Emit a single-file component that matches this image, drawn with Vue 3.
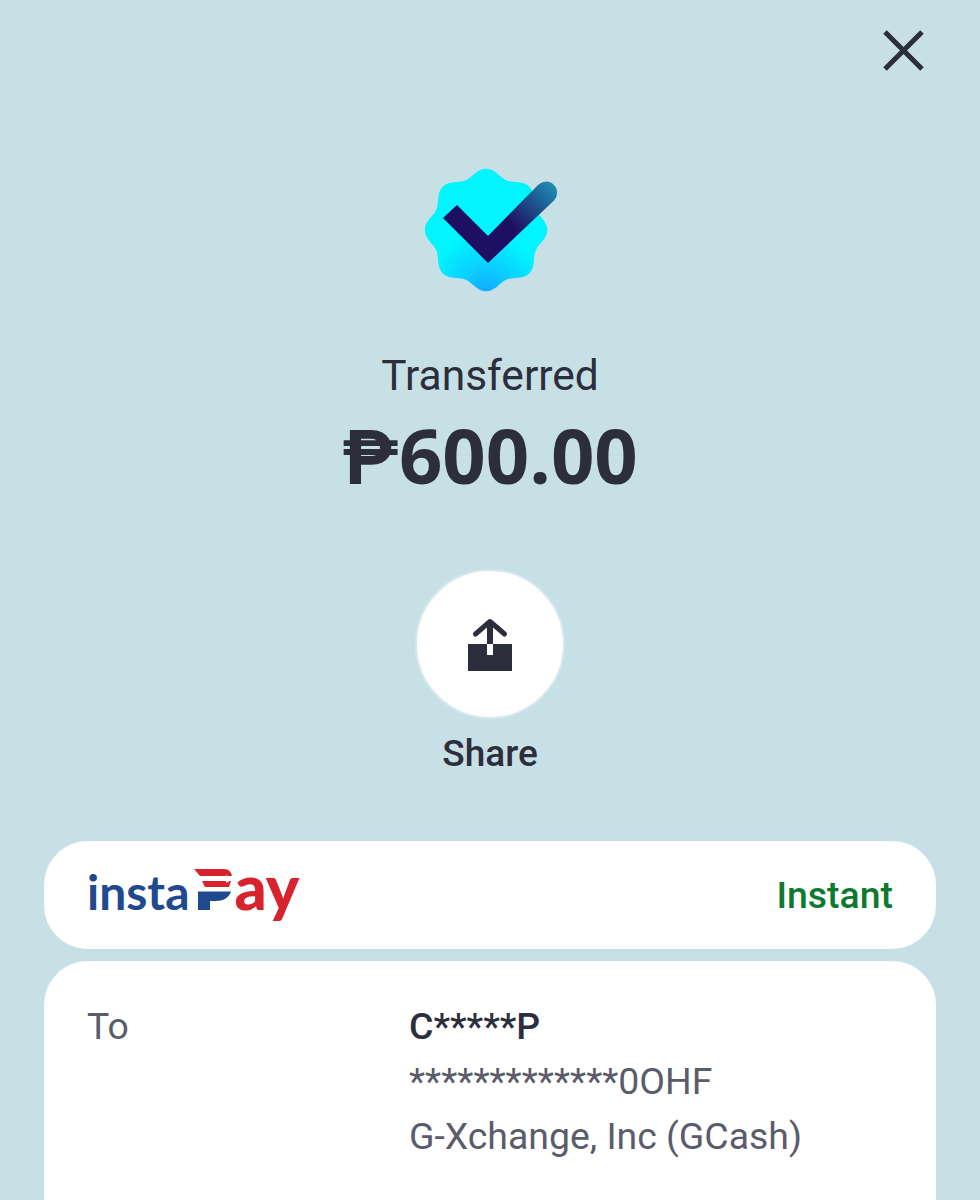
<script setup>
const details = [
  { text: 'C*****P', strong: true },
  { text: '*************0OHF' },
  { text: 'G-Xchange, Inc (GCash)' }
]

// 8 lobed badge outline around 0,0
function badgePath(radius, wave) {
  const pts = []
  for (let i = 0; i < 160; i++) {
    const a = (i / 160) * Math.PI * 2
    const r = radius + wave * Math.cos(a * 8)
    pts.push(`${(r * Math.sin(a)).toFixed(2)} ${(-r * Math.cos(a)).toFixed(2)}`)
  }
  return 'M' + pts.join('L') + 'Z'
}

const badge = badgePath(57.5, 3.8)
</script>

<template>
  <div class="screen">
    <div class="top-bar">
      <svg class="close" width="41" height="41" viewBox="0 0 41 41" fill="none">
        <path d="M2 2L39 39M39 2L2 39" stroke="#2d2e3c" stroke-width="5" />
      </svg>
    </div>

    <div class="summary">
      <svg class="badge" width="134" height="124" viewBox="425 168 134 124">
        <defs>
          <radialGradient id="badgeFill" gradientUnits="userSpaceOnUse" cx="0" cy="62" r="58">
            <stop offset="0" stop-color="#11aaff" />
            <stop offset="0.45" stop-color="#0bcfff" />
            <stop offset="1" stop-color="#00f5ff" />
          </radialGradient>
          <linearGradient id="tickFill" gradientUnits="userSpaceOnUse" x1="512" y1="226" x2="554" y2="184">
            <stop offset="0" stop-color="#1d0f62" />
            <stop offset="1" stop-color="#1f8fb4" />
          </linearGradient>
        </defs>
        <path :d="badge" transform="translate(486 230)" fill="url(#badgeFill)" />
        <path d="M443 218L457 205L488 236V263Z" fill="#1d0f62" />
        <path d="M488 236L538 185A11 11 0 0 1 554 200.5L488 263Z" fill="url(#tickFill)" />
      </svg>

      <div class="label">Transferred</div>
      <div class="amount">₱600.00</div>

      <div class="share">
        <div class="share-circle">
          <svg class="share-icon" width="44" height="54" viewBox="0 0 44 54">
            <rect x="0" y="26" width="44" height="27" fill="#2d2e3c" />
            <path d="M22 4V26" stroke="#2d2e3c" stroke-width="6" />
            <path d="M7.5 16L22 3.5L36.5 16" fill="none" stroke="#2d2e3c" stroke-width="5" stroke-linecap="round" stroke-linejoin="round" />
            <rect x="19" y="26" width="6" height="11" fill="#fff" />
          </svg>
        </div>
        <div class="share-label">Share</div>
      </div>
    </div>

    <div class="card card-network">
      <div class="logo">
        <span class="logo-blue">insta</span>
        <svg class="logo-p" width="40" height="41" viewBox="192 869 40 41">
          <path d="M192 869H222C227 869 229 872 230 876H198Z" fill="#d8232f" />
          <path d="M200 881H229L227 887H203Z" fill="#d8232f" />
          <path d="M198 877.5H224V875L231 879L224 883V880.5H198Z" fill="#fff" />
          <path d="M228 888H201V885L194 889L201 893V890H228Z" fill="#fff" />
          <path d="M196 891.5H229C227 898 221 901 214 901H208V910H196Z" fill="#1f4a8f" />
        </svg>
        <span class="logo-red">ay</span>
      </div>
      <span class="speed">Instant</span>
    </div>

    <div class="card card-details">
      <span class="detail-label">To</span>
      <div class="detail-values">
        <div v-for="line in details" :key="line.text" :class="{ strong: line.strong }">{{ line.text }}</div>
      </div>
    </div>
  </div>
</template>

<style>
html,
body {
  margin: 0;
  background: #c7e0e6;
}
</style>

<style scoped>
.screen {
  width: 980px;
  height: 1200px;
  overflow: hidden;
  background: #c7e0e6;
  color: #2d2e3c;
  font-family: Roboto, "Liberation Sans", sans-serif;
}

.top-bar {
  display: flex;
  justify-content: flex-end;
  padding: 30px 56px 0 0;
}

.close {
  display: block;
}

.summary {
  display: flex;
  flex-direction: column;
  align-items: center;
  padding-top: 97px;
}

.badge {
  display: block;
  margin-left: 3px;
}

.label {
  margin-top: 55px;
  font-size: 42.5px;
  line-height: 58px;
}

.amount {
  margin-top: 6px;
  font-family: "Open Sans", Roboto, sans-serif;
  font-size: 76px;
  font-weight: 700;
  line-height: 88px;
}

.share {
  display: flex;
  flex-direction: column;
  align-items: center;
  margin-top: 70px;
}

.share-circle {
  display: flex;
  align-items: center;
  justify-content: center;
  box-sizing: border-box;
  width: 150px;
  height: 150px;
  border: 2px solid #d6e8ec;
  border-radius: 50%;
  background: #fff;
}

.share-icon {
  margin-top: 2px;
}

.share-label {
  margin-top: 12px;
  font-size: 37px;
  font-weight: 500;
  line-height: 46px;
}

.card {
  box-sizing: border-box;
  margin: 0 44px;
  border-radius: 44px;
  background: #fff;
}

.card-network {
  display: flex;
  align-items: center;
  justify-content: space-between;
  height: 108px;
  margin-top: 64px;
  padding: 0 43px;
}

.logo {
  display: flex;
  align-items: baseline;
  height: 56px;
  margin-bottom: 18px;
}

.logo-blue,
.logo-red {
  font-family: Lato, sans-serif;
  line-height: 56px;
}

.logo-blue {
  color: #1f4a8f;
  font-size: 48px;
  font-weight: 700;
}

.logo-red {
  color: #d8232f;
  font-size: 63px;
  font-weight: 900;
  margin-left: 1px;
}

.logo-p {
  display: block;
  margin-left: 4px;
}

.speed {
  color: #0e7a2f;
  font-size: 37.4px;
  font-weight: 500;
}

.card-details {
  display: grid;
  grid-template-columns: 322px 1fr;
  margin-top: 12px;
  height: 400px;
  padding: 38px 43px 0;
  color: #5b5c6b;
  font-size: 37.4px;
  line-height: 55px;
}

.detail-values .strong {
  color: #2d2e3c;
  font-weight: 500;
}
</style>
